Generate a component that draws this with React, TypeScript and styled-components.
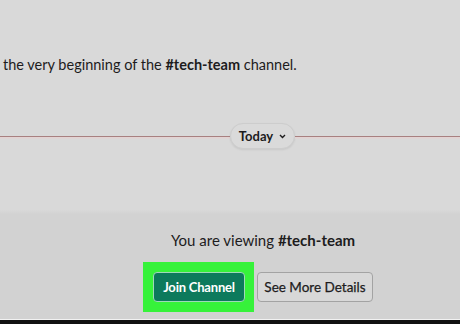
import React from "react";
import styled, { createGlobalStyle } from "styled-components";

const Global = createGlobalStyle`
  html, body { margin: 0; padding: 0; background: #d8d8d8; }
  body { font-family: Lato, "Open Sans", sans-serif; color: #1d1c1d; }
`;

const Screen = styled.div`
  width: 460px;
  height: 324px;
  display: flex;
  flex-direction: column;
  overflow: hidden;
  background: #d8d8d8;
`;

const Messages = styled.div`
  height: 210px;
  flex: none;
  display: flex;
  flex-direction: column;
  background: #d9d9d9;
`;

const Intro = styled.p`
  margin: 55px 0 0 3px;
  font-size: 14.5px;
  line-height: 20px;
  white-space: nowrap;
  color: #1d1c1d;
`;

const Bold = styled.b`
  font-weight: 700;
`;

const Divider = styled.div`
  margin-top: 48px;
  display: flex;
  align-items: center;
  height: 26px;
`;

const Rule = styled.div<{ $width?: number }>`
  flex: ${(p) => (p.$width ? `0 0 ${p.$width}px` : "1")};
  height: 1px;
  background: #a88080;
  box-shadow: 0 1px 0 #e2d3d3, 0 2px 0 #dfd5d5;
`;

const DatePill = styled.div`
  width: 65px;
  height: 26px;
  box-sizing: border-box;
  border-radius: 13px;
  border: 1px solid #cdcdcd;
  background: #dadada;
  box-shadow: 0 1px 2px rgba(0, 0, 0, 0.08);
  display: flex;
  align-items: center;
  justify-content: center;
  gap: 6px;
  font-size: 13px;
  font-weight: 700;
  color: #1d1c1d;
`;

const Footer = styled.div`
  flex: 1;
  min-height: 0;
  background: linear-gradient(#d8d8d8 0px, #d2d2d2 4px, #d2d2d2 100%);
  display: flex;
  flex-direction: column;
  align-items: center;
  padding-left: 66px;
  padding-top: 20px;
`;

const Viewing = styled.div`
  font-size: 15px;
  line-height: 20px;
  color: #1d1c1d;
`;

const ButtonRow = styled.div`
  margin-top: 12px;
  margin-right: 10px;
  display: flex;
  align-items: center;
  gap: 3px;
`;

const Highlight = styled.div`
  background: #36f23a;
  padding: 10px 9px 10px 10px;
  display: flex;
`;

const Button = styled.button<{ $primary?: boolean }>`
  height: 30px;
  box-sizing: border-box;
  border-radius: 4px;
  font-family: Lato, "Open Sans", sans-serif;
  font-size: ${(p) => (p.$primary ? "13px" : "13.5px")};
  font-weight: ${(p) => (p.$primary ? 700 : 400)};
  padding: 0;
  cursor: pointer;
  width: ${(p) => (p.$primary ? "92px" : "116px")};
  color: ${(p) => (p.$primary ? "#ffffff" : "#1d1c1d")};
  background: ${(p) => (p.$primary ? "#0d7a5c" : "#d8d8d8")};
  border: 1px solid ${(p) => (p.$primary ? "#9fd8b8" : "#a3a3a3")};
  letter-spacing: ${(p) => (p.$primary ? "-0.2px" : "0")};
  -webkit-text-stroke: ${(p) => (p.$primary ? "0" : "0.25px #1d1c1d")};
`;

const BottomBar = styled.div`
  height: 4px;
  flex: none;
  background: #111;
  border-top: 1px solid #f2f2f2;
`;

const Chevron = () => (
  <svg width="7" height="5" viewBox="0 0 7 5">
    <path d="M1 1l2.5 2.5L6 1" fill="none" stroke="#1d1c1d" strokeWidth="1.4" />
  </svg>
);

export default function App() {
  return (
    <>
      <Global />
      <Screen>
        <Messages>
          <Intro>
            the very beginning of the <Bold>#tech-team</Bold> channel.
          </Intro>
          <Divider>
            <Rule $width={230} />
            <DatePill>
              Today <Chevron />
            </DatePill>
            <Rule />
          </Divider>
        </Messages>
        <Footer>
          <Viewing>
            You are viewing <Bold>#tech-team</Bold>
          </Viewing>
          <ButtonRow>
            <Highlight>
              <Button $primary>Join Channel</Button>
            </Highlight>
            <Button>See More Details</Button>
          </ButtonRow>
        </Footer>
        <BottomBar />
      </Screen>
    </>
  );
}
